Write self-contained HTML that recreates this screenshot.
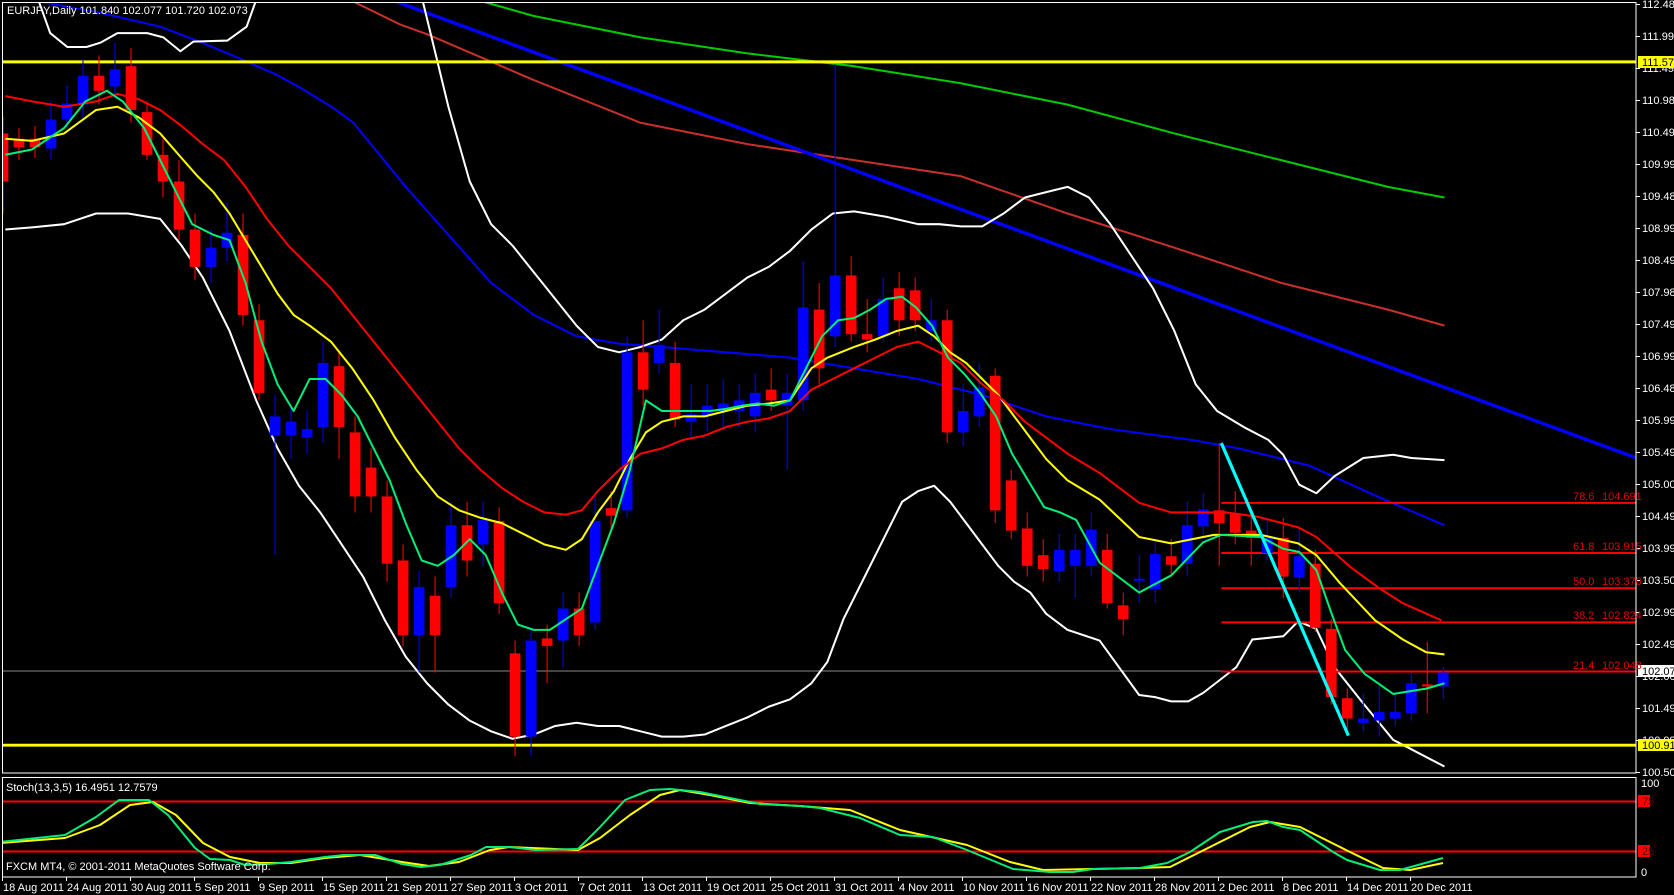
<!DOCTYPE html>
<html><head><meta charset="utf-8"><style>
html,body{margin:0;padding:0;background:#000;width:1674px;height:895px;overflow:hidden}
svg{display:block}
text{font-family:"Liberation Sans",sans-serif;font-size:11px}
</style></head><body>
<svg id="s" width="1674" height="895" xmlns="http://www.w3.org/2000/svg">
<rect width="1674" height="895" fill="#000"/>
<defs><clipPath id="cm"><rect x="2" y="2" width="1530" height="721"/></clipPath>
<clipPath id="cs"><rect x="2" y="777" width="1634" height="100"/></clipPath></defs>
<g id="main" transform="scale(1.0676)" clip-path="url(#cm)"></g>
<g id="stoch" clip-path="url(#cs)"></g>
<g id="txt"></g>
</svg>
<script>
var NS='http://www.w3.org/2000/svg';
function el(p,t,a,tx){var e=document.createElementNS(NS,t);for(var k in a)e.setAttribute(k,a[k]);if(tx!==undefined)e.textContent=tx;p.appendChild(e);return e;}
var M=document.getElementById('main'),S=document.getElementById('stoch'),T=document.getElementById('txt');
function pl(g,pts,c,w){el(g,'polyline',{points:pts.map(function(p){return p.join(',')}).join(' '),fill:'none',stroke:c,'stroke-width':w,'stroke-linejoin':'round'});}
el(M,'line',{x1:0,y1:628.5,x2:1540,y2:628.5,stroke:'#8a8a8a','stroke-width':0.9});
pl(M,[[440,-2],[500,15],[600,35],[700,50],[800,62],[900,78],[1000,98],[1100,125],[1200,150],[1300,175],[1353,185]],'#00cc00',1.9);
pl(M,[[320,-5],[334,3],[375,23],[400,32],[500,75],[600,115],[700,135],[800,150],[900,165],[1000,200],[1100,232],[1200,265],[1300,290],[1353,305]],'#c8302a',1.9);
pl(M,[[30,0],[56,5],[94,12],[150,25],[187,39],[218,52],[259,70],[281,82],[312,101],[331,115],[380,175],[420,220],[460,265],[500,295],[540,315],[580,322],[620,325],[680,330],[740,335],[800,345],[860,355],[920,370],[980,390],[1040,402],[1116,412],[1160,420],[1226,436],[1290,465],[1353,492]],'#0000ff',1.9);
el(M,'line',{x1:367,y1:0,x2:1533,y2:429,stroke:'#0000ff','stroke-width':3.2});
pl(M,[[37,-3],[37,3],[47,31],[63,44],[81,44],[94,40],[110,31],[138,31],[153,35],[169,48],[181,39],[213,38],[231,25],[241,-3]],'#fff',1.9);
pl(M,[[5,215],[30,213],[60,210],[90,200],[120,200],[150,205],[170,230],[190,260],[215,310],[240,375],[260,420],[280,455],[300,480],[320,510],[340,540],[360,580],[380,615],[400,640],[420,660],[440,675],[460,685],[480,692],[500,688],[520,680],[540,677],[560,680],[580,680],[600,685],[620,690],[640,690],[660,688],[680,680],[700,672],[720,662],[740,655],[760,640],[775,620],[790,580],[810,540],[830,500],[845,470],[860,460],[875,455],[890,470],[905,490],[920,510],[935,530],[950,545],[965,555],[980,575],[1000,590],[1030,600],[1067,651],[1082,653],[1097,657],[1113,657],[1127,649],[1158,625],[1173,599],[1202,596],[1216,582],[1233,589],[1250,625],[1277,659],[1305,693],[1353,718]],'#fff',1.9);
pl(M,[[395,-3],[420,100],[440,170],[460,210],[480,230],[500,255],[520,280],[540,305],[560,325],[580,330],[600,325],[620,318],[640,300],[660,290],[680,275],[700,260],[720,250],[740,235],[760,215],[780,200],[800,198],[830,203],[860,210],[880,210],[900,212],[920,212],[940,200],[960,185],[980,180],[1000,175],[1020,185],[1040,210],[1060,240],[1080,270],[1100,310],[1120,360],[1140,385],[1165,400],[1188,412],[1202,426],[1217,454],[1233,462],[1250,446],[1277,429],[1305,426],[1322,429],[1353,431]],'#fff',1.9);
[471,518,551,583,629].forEach(function(y){el(M,'line',{x1:1144,y1:y,x2:1540,y2:y,stroke:'#ff0000','stroke-width':1.9});});
el(M,'line',{x1:0,y1:58,x2:1540,y2:58,stroke:'#ffff00','stroke-width':2.8});
el(M,'line',{x1:0,y1:698,x2:1540,y2:698,stroke:'#ffff00','stroke-width':2.8});
var C=[[125,170,'r',110,200],[130,138,'r',120,150],[130,138,'r',118,148],[112,139,'b',95,150],[97,112,'b',80,120],[71,98,'b',55,110],[71,85,'r',52,98],[65,81,'b',40,92],[62,103,'r',45,115],[105,145,'r',95,150],[145,170,'r',130,185],[170,215,'r',150,225],[215,250,'r',200,262],[232,250,'b',215,265],[218,232,'b',190,245],[220,295,'r',200,305],[300,368,'r',285,375],[390,408,'b',370,520],[395,408,'b',380,430],[402,410,'b',385,425],[340,400,'b',320,415],[343,400,'r',328,430],[405,465,'r',390,480],[438,465,'r',420,480],[465,528,'r',450,545],[525,595,'r',510,605],[550,595,'b',535,630],[558,595,'r',540,630],[492,550,'b',470,560],[492,525,'r',470,540],[487,510,'b',470,530],[488,565,'r',475,575],[612,690,'r',600,708],[600,690,'b',590,708],[598,605,'r',585,640],[570,600,'b',555,625],[570,595,'r',555,605],[488,583,'b',465,590],[476,483,'r',460,495],[330,478,'b',315,485],[330,365,'r',300,380],[323,340,'b',290,350],[340,393,'r',320,400],[388,395,'b',360,410],[380,390,'b',360,405],[378,385,'b',355,400],[375,385,'b',360,400],[368,390,'b',350,405],[365,375,'r',345,385],[368,380,'b',350,440],[288,375,'b',245,385],[290,345,'r',265,360],[258,315,'b',60,325],[258,313,'r',240,320],[313,318,'r',280,330],[280,315,'b',260,320],[270,300,'r',255,315],[272,300,'r',260,310],[300,310,'b',280,320],[300,405,'r',290,415],[385,405,'b',360,418],[363,390,'b',340,400],[352,478,'r',345,490],[450,497,'r',440,505],[495,530,'r',480,540],[520,533,'r',505,545],[515,535,'b',500,545],[515,530,'b',500,560],[496,530,'b',480,540],[515,565,'r',500,570],[567,580,'r',555,595],[542,544,'b',520,565],[519,552,'b',505,565],[521,529,'r',505,540],[492,528,'b',470,540],[477,493,'b',462,505],[478,490,'r',415,530],[481,499,'r',460,510],[497,504,'r',480,530],[504,518,'b',485,525],[504,540,'r',485,560],[521,541,'b',495,555],[528,588,'r',515,592],[589,653,'r',580,660],[654,673,'r',645,685],[673,677,'b',650,685],[667,675,'b',640,690],[667,673,'b',650,680],[640,668,'b',630,675],[641,643,'r',601,668],[630,643,'b',625,655]];
C.forEach(function(c,k){var x=2.8+14.99*k,col=c[2]=='r'?'#ff0000':'#0000ff';
el(M,'line',{x1:x,y1:c[3],x2:x,y2:c[4],stroke:col,'stroke-width':1});
el(M,'rect',{x:x-5,y:c[0],width:10,height:Math.max(1.5,c[1]-c[0]),fill:col});});
pl(M,[[5,130],[30,132],[60,125],[90,103],[110,100],[130,110],[150,125],[170,148],[185,165],[200,180],[215,200],[230,225],[245,250],[260,275],[275,295],[290,305],[310,320],[330,345],[350,375],[370,410],[390,440],[410,465],[430,478],[450,485],[470,490],[490,500],[510,510],[530,515],[545,505],[560,480],[575,460],[590,430],[605,405],[620,395],[640,390],[660,390],[680,385],[700,380],[720,378],[740,375],[760,345],[775,335],[800,325],[820,318],[840,310],[860,305],[875,315],[890,330],[905,340],[920,355],[935,370],[950,390],[965,410],[980,430],[1000,450],[1030,468],[1067,503],[1097,509],[1137,501],[1181,501],[1216,509],[1233,520],[1255,546],[1288,581],[1314,599],[1336,611],[1353,613]],'#ffff00',1.9);
pl(M,[[5,90],[30,95],[60,100],[90,95],[110,88],[130,93],[150,103],[170,118],[190,135],[210,150],[230,175],[250,205],[270,230],[290,250],[310,270],[330,295],[350,320],[370,345],[390,370],[410,395],[430,420],[450,440],[470,457],[490,470],[510,480],[530,482],[545,478],[560,460],[580,440],[600,425],[620,420],[640,412],[660,408],[680,400],[700,395],[720,392],[740,385],[760,365],[780,355],[800,345],[820,335],[840,325],[860,320],[880,330],[900,340],[920,360],[940,375],[960,395],[980,410],[1000,425],[1030,443],[1067,471],[1097,480],[1149,480],[1178,484],[1216,494],[1233,503],[1266,532],[1292,551],[1314,565],[1350,581]],'#ff0000',1.9);
pl(M,[[5,145],[30,140],[60,120],[80,95],[100,85],[115,95],[135,120],[150,150],[165,180],[180,210],[200,220],[215,225],[230,265],[245,320],[260,360],[275,385],[290,355],[305,355],[320,370],[335,390],[350,420],[365,450],[380,490],[395,525],[410,530],[425,520],[440,505],[455,520],[470,555],[485,585],[500,590],[515,590],[530,580],[545,570],[560,530],[575,490],[590,440],[605,375],[620,385],[635,385],[650,385],[665,385],[680,383],[695,380],[710,378],[725,380],[740,375],[755,345],[770,315],[785,300],[800,298],[815,290],[830,280],[845,278],[858,288],[873,305],[888,335],[903,350],[918,368],[933,390],[948,425],[963,450],[978,475],[993,480],[1008,487],[1030,527],[1067,555],[1097,539],[1127,508],[1144,501],[1181,503],[1202,514],[1217,517],[1233,534],[1247,574],[1260,609],[1278,631],[1305,650],[1336,645],[1353,640]],'#00ee77',1.9);
el(M,'line',{x1:1144,y1:415,x2:1263,y2:689,stroke:'#00ffff','stroke-width':3});
el(T,'rect',{x:2.5,y:2.5,width:1633.5,height:770.5,fill:'none',stroke:'#fff','stroke-width':1});
el(T,'rect',{x:2.5,y:777.5,width:1633.5,height:99.5,fill:'none',stroke:'#fff','stroke-width':1});
el(S,'line',{x1:0,y1:801.5,x2:1636,y2:801.5,stroke:'#ff0000','stroke-width':2});
el(S,'line',{x1:0,y1:851.5,x2:1636,y2:851.5,stroke:'#ff0000','stroke-width':2});
pl(S,[[0,843],[65,838],[100,825],[130,805],[153,802],[176,815],[203,843],[230,857],[260,863],[291,863],[325,858],[360,855],[402,862],[429,866],[459,862],[490,850],[509,847],[578,850],[600,838],[630,815],[660,795],[680,790],[710,795],[750,803],[800,806],[850,810],[900,830],[967,845],[1010,862],[1043,870],[1140,868],[1170,867],[1210,847],[1250,827],[1270,822],[1300,827],[1330,842],[1350,852],[1383,868],[1410,870],[1443,863]],'#ffff00',2);
pl(S,[[0,842],[65,835],[96,817],[119,800],[149,800],[168,815],[195,848],[210,859],[230,860],[245,865],[268,864],[291,862],[325,857],[344,855],[375,855],[402,864],[421,867],[440,865],[471,855],[486,847],[509,847],[536,850],[578,849],[600,827],[625,800],[650,790],[670,789],[700,792],[740,800],[760,804],[800,806],[820,808],[860,818],[900,835],[933,837],[967,850],[1013,869],[1050,872],[1073,872],[1093,869],[1140,868],[1167,863],[1190,852],[1220,832],[1253,822],[1267,821],[1283,827],[1300,830],[1333,852],[1347,860],[1380,870],[1400,870],[1443,858]],'#00ee77',2);
el(T,'text',{x:7,y:14,fill:'#fff'},'EURJPY,Daily  101.840 102.077 101.720 102.073');
el(T,'text',{x:6,y:791,fill:'#fff'},'Stoch(13,3,5) 16.4951 12.7579');
el(T,'text',{x:6,y:870,fill:'#fff'},'FXCM MT4, \u00a9 2001-2011 MetaQuotes Software Corp.');
var P=['112.485','111.990','111.495','110.985','110.490','109.995','109.485','108.990','108.495','107.985','107.490','106.995','106.485','105.990','105.495','105.000','104.490','103.995','103.500','102.990','102.495','102.000','101.490','100.995','100.500'];
P.forEach(function(p,i){var y=4+32*i;el(T,'line',{x1:1636,y1:y+.5,x2:1640,y2:y+.5,stroke:'#fff'});el(T,'text',{x:1642,y:y+4,fill:'#fff'},p);});
function box(y,bg,fg,t,x,w){el(T,'rect',{x:x||1638,y:y-6,width:w||36,height:12,fill:bg});el(T,'text',{x:(x||1638)+4,y:y+4,fill:fg},t);}
box(62,'#ffff00','#000','111.579');box(745,'#ffff00','#000','100.914');box(671,'#fff','#000','102.073');
box(801,'#ff0000','#600','75',1638,12);box(851,'#ff0000','#600','25',1638,12);
el(T,'text',{x:1641,y:787,fill:'#fff'},'100');el(T,'text',{x:1641,y:876,fill:'#fff'},'0');
[['78.6','104.691',503],['61.8','103.915',553],['50.0','103.370',588],['38.2','102.824',622],['21.4','102.048',672]].forEach(function(f){
el(T,'text',{x:1573,y:f[2]-3,fill:'#e00000'},f[0]);el(T,'text',{x:1602,y:f[2]-3,fill:'#e00000'},f[1]);});
var D=['18 Aug 2011','24 Aug 2011','30 Aug 2011','5 Sep 2011','9 Sep 2011','15 Sep 2011','21 Sep 2011','27 Sep 2011','3 Oct 2011','7 Oct 2011','13 Oct 2011','19 Oct 2011','25 Oct 2011','31 Oct 2011','4 Nov 2011','10 Nov 2011','16 Nov 2011','22 Nov 2011','28 Nov 2011','2 Dec 2011','8 Dec 2011','14 Dec 2011','20 Dec 2011'];
D.forEach(function(d,i){var x=2+64*i;el(T,'line',{x1:x+.5,y1:877,x2:x+.5,y2:881,stroke:'#fff'});el(T,'text',{x:x+1,y:891,fill:'#fff'},d);});
</script>
</body></html>
